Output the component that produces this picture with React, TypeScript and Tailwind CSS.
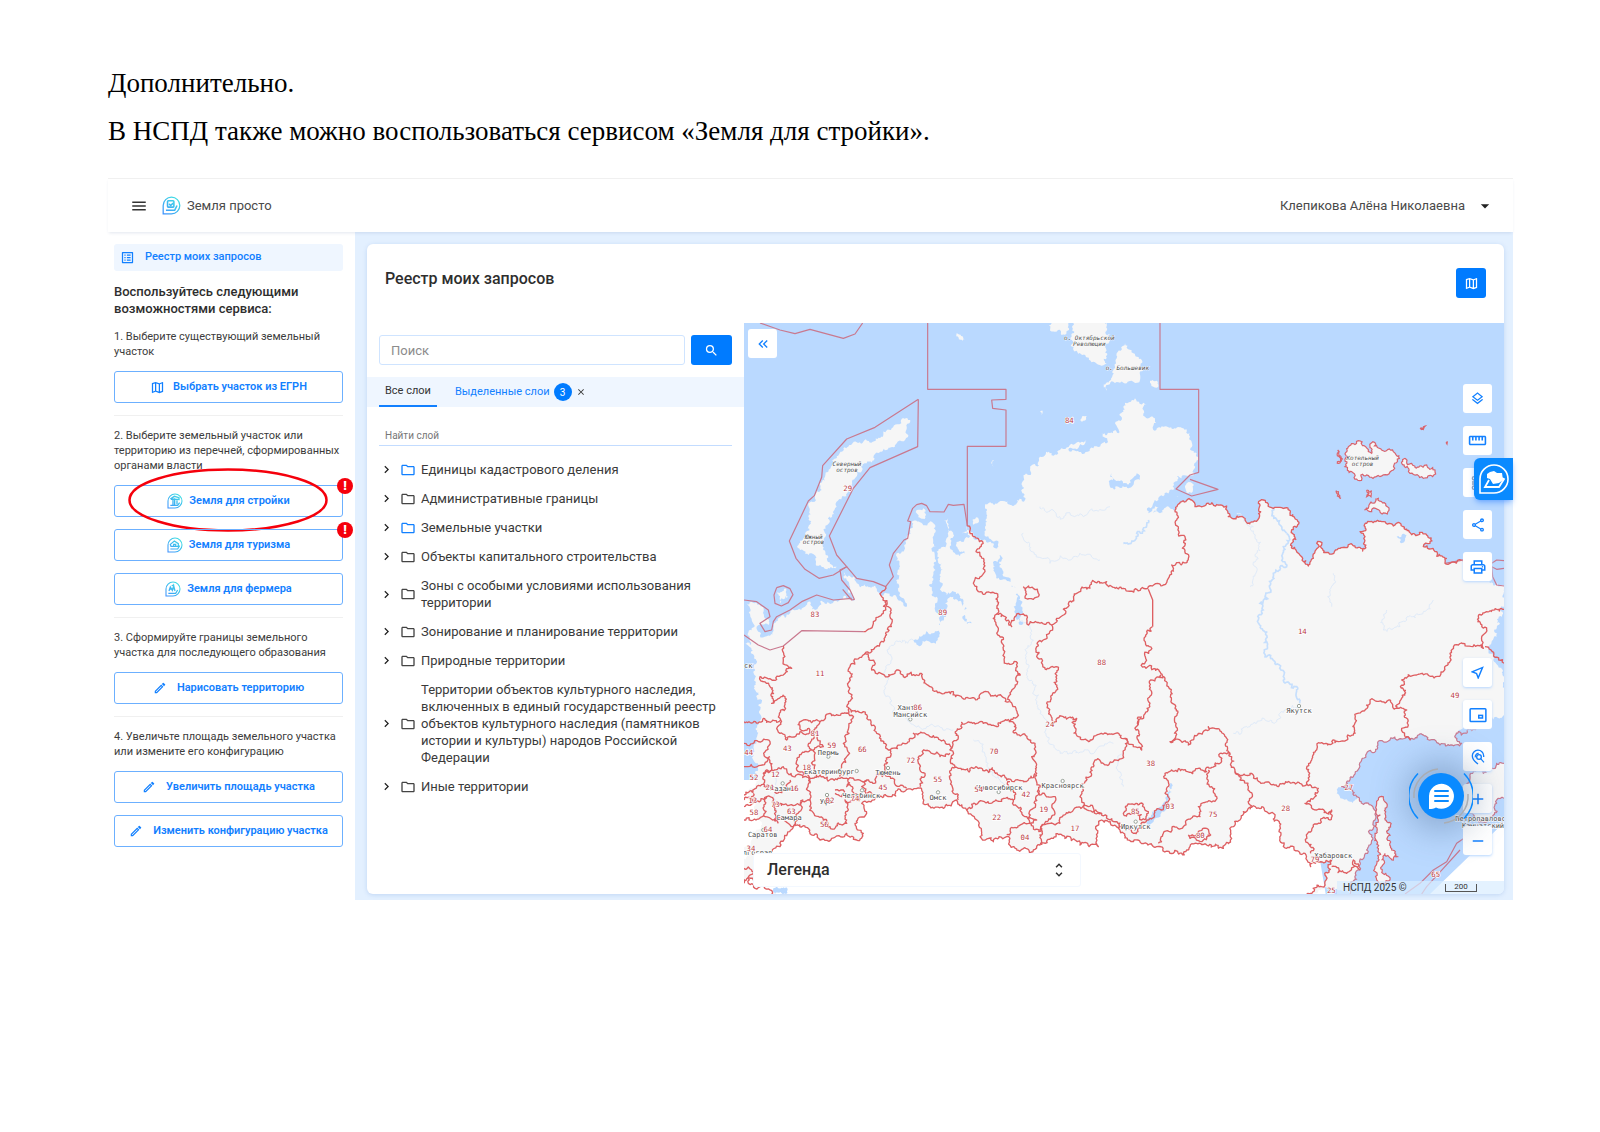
import type { ReactNode } from "react";
import {
  MdAdd,
  MdArrowDropDown,
  MdChevronRight,
  MdClose,
  MdKeyboardDoubleArrowLeft,
  MdListAlt,
  MdMenu,
  MdOutlineFolder,
  MdOutlineLayers,
  MdOutlineMap,
  MdOutlineModeEdit,
  MdOutlineNearMe,
  MdOutlinePrint,
  MdOutlineShare,
  MdRemove,
  MdSearch,
  MdStraighten,
  MdUnfoldMore,
} from "react-icons/md";

type Point = [number, number];

const layers = [
  { title: "Единицы кадастрового деления", active: true },
  { title: "Административные границы", active: false },
  { title: "Земельные участки", active: true },
  { title: "Объекты капитального строительства", active: false },
  { title: "Зоны с особыми условиями использования территории", active: false },
  { title: "Зонирование и планирование территории", active: false },
  { title: "Природные территории", active: false },
  {
    title:
      "Территории объектов культурного наследия, включенных в единый государственный реестр объектов культурного наследия (памятников истории и культуры) народов Российской Федерации",
    active: false,
  },
  { title: "Иные территории", active: false },
];

/* ---------- map data ---------- */

const northCoast =
  "12,970 30,975 32,870 20,850 70,862 88,900 85,915 50,920 60,945 100,945 115,895 150,880 170,870 195,860 205,845 225,870 240,845 300,840 345,840 330,800 310,770 315,755 345,775 350,790 400,800 440,820 490,850 505,875 500,850 480,820 470,790 480,740 470,700 500,650 515,605 580,610 583,640 575,690 588,720 580,780 590,830 585,870 600,890 600,920 575,940 520,960 575,970 600,940 625,880 615,850 640,830 665,850 672,900 695,910 676,890 670,840 620,825 605,800 605,730 590,695 620,670 625,630 612,600 625,595 640,650 645,700 690,710 650,680 655,665 690,650 665,640 680,620 700,645 760,670 780,690 765,740 780,780 815,800 830,840 845,915 846,850 825,800 795,770 785,710 775,680 735,620 740,590 735,560 830,550 855,540 845,490 870,450 910,410 960,390 1040,360 985,388 1060,385 1100,370 1085,340 1135,340 1125,310 1150,260 1185,235 1220,255 1215,290 1245,300 1240,330 1270,320 1330,325 1350,350 1370,400 1360,450 1310,470 1300,510 1240,550 1225,580 1290,565";
const laptevCoast =
  "1305,570 1325,545 1355,540 1365,560 1400,550 1460,558 1465,590 1515,600 1553,600 1555,550 1570,540 1600,565 1640,563 1672,600 1668,690 1685,710 1705,738 1720,715 1730,670 1740,665 1745,685 1765,697 1800,685 1860,682 1868,693 1875,650 1860,635 1890,605 1960,618 2010,638 2060,645 2070,670 2050,680 2085,695 2115,730 2180,715";
const okhotskCoast =
  "2230,1210 2155,1235 2150,1260 2165,1270 2100,1275 2060,1250 2010,1260 1920,1262 1880,1300 1840,1370 1805,1400 1850,1430 1900,1465 1905,1500 1890,1530 1880,1590 1860,1650 1830,1722";
const southBorder =
  "1700,1722 1745,1700 1755,1665 1775,1620 1712,1640 1695,1600 1640,1585 1620,1520 1600,1480 1550,1465 1510,1475 1500,1500 1480,1520 1475,1555 1450,1585 1400,1575 1370,1570 1340,1590 1290,1600 1250,1580 1180,1565 1140,1530 1085,1500 1070,1530 1075,1580 1020,1575 990,1550 940,1555 900,1575 870,1600 820,1580 800,1550 720,1550 680,1470 650,1440 610,1465 550,1445 545,1410 500,1408 450,1430 365,1450 380,1480 345,1510 370,1540 350,1560 320,1540 240,1560 160,1520 120,1580 90,1600 70,1650 40,1680 12,1690";

const mainland = `${northCoast} ${laptevCoast} 2250,720 2250,790 2292,800 2292,1190 ${okhotskCoast} ${southBorder}`;

const islands = [
  "485,297 508,310 505,345 470,370 420,395 380,430 350,455 330,500 290,560 255,640 250,690 290,740 240,735 215,700 180,690 175,660 195,640 205,590 225,530 245,510 255,470 280,430 310,385 370,365 430,345 455,325",
  "1000,9 1100,9 1110,60 1095,80 1100,130 1060,125 1000,90 995,60",
  "935,9 985,9 980,40 945,35",
  "1155,70 1180,100 1210,150 1200,180 1160,190 1120,185 1100,212 1098,190 1125,140 1130,100",
  "110,820 135,805 145,830 120,850",
  "530,570 550,565 558,585 535,592",
  "697,600 708,592 712,610 700,614",
  "650,40 675,58 668,62",
  "900,275 908,272 905,285",
  "1018,295 1040,288 1030,302",
  "1230,182 1255,195 1240,200",
  "1340,490 1362,495 1358,515 1340,518",
  "1290,535 1315,530 1300,550",
  "755,425 763,422 760,440",
];

const borderedIslands = [
  "1825,380 1855,362 1885,395 1895,400 1893,370 1905,368 1925,390 1960,395 1978,415 1960,450 1920,470 1880,465 1858,482 1835,455 1815,440 1820,410",
  "1995,415 2015,430 2060,435 2085,450 2078,470 2050,475 2010,460 1993,440",
  "1893,545 1915,535 1942,560 1942,582 1895,575 1873,570",
  "1880,510 1895,512 1893,530 1880,530",
  "1793,390 1803,410 1792,430",
  "1788,512 1795,515 1803,535",
  "2040,325 2056,318 2050,328",
  "2118,367 2122,366 2121,372",
  "1915,1440 1930,1430 1940,1450 1935,1480 1945,1530 1955,1590 1972,1610 1960,1620 1935,1600 1925,1640 1950,1680 1930,1690 1910,1680 1905,1640 1915,1590 1905,1540 1915,1500 1910,1450",
];

const kamchatka =
  "2292,1330 2270,1330 2230,1360 2210,1350 2190,1375 2180,1440 2200,1500 2250,1500 2270,1440 2292,1435";

const seaBorders = [
  "60,9 120,30 165,41 210,28 310,55 345,42 368,9",
  "563,9 563,208 798,208 798,238 755,240 758,265 798,270 798,379 682,379 682,618",
  "535,238 405,322 320,357 248,437 245,472 223,527 205,543 148,663 168,715 195,748 237,775 280,765 320,740 290,705 268,648 340,505 390,443 533,380 535,238",
  "1260,9 1260,208 1376,208 1376,457 1350,465 1308,507 1355,528 1434,508 1350,478",
  "320,740 350,775 400,785 437,800 460,770 448,735 460,700 492,660 503,655 512,605 503,603 518,565 530,554 545,550 560,557 570,575 612,576 625,553 640,556 672,553 682,618",
  "320,740 300,750 305,780 330,810 343,838 335,840 308,808",
  "335,835 280,840 230,825 185,845 150,870 110,890 100,905 95,930 75,935 60,910 90,890 85,870 50,845 12,840",
  "12,945 55,975 90,990 130,978 185,932 370,935",
  "110,803 130,797 150,806 159,824 145,848 124,858 105,850 102,825 110,803",
  "2180,715 2160,722 2115,730",
  "2255,730 2270,720 2292,722",
  "2255,740 2270,748 2292,745",
  "2255,740 2258,770 2270,795 2292,798",
  "2170,1556 2150,1570 2120,1625 2080,1650 2040,1690 1995,1722",
  "2160,1590 2110,1645 2060,1700 2045,1722",
];

const landBorders = [
  "370,935 400,905 430,880 440,840",
  "682,618 700,650 728,665 708,695 732,720 735,755 702,785 715,815 765,820 775,870 760,895 775,930 790,990 805,1030 832,1040 832,1090 810,1145 832,1180 808,1205 730,1210 665,1207 655,1250 630,1290 645,1340 635,1395 655,1440",
  "770,880 815,920 830,882 850,882 865,915 935,915 950,895 985,860 1010,820 1050,795 1100,785 1150,805 1190,808 1225,800 1270,795 1285,775 1295,735 1345,715 1335,650 1310,600 1305,570",
  "935,915 895,965 890,1010 955,1050 950,1100 920,1150 940,1210 970,1190 1010,1195 1015,1250 1060,1255 1100,1240 1155,1255 1180,1280 1205,1290 1195,1210 1230,1150 1232,1080 1270,1075",
  "1237,920 1220,935 1232,990 1218,1045 1270,1070 1285,1100 1305,1190 1290,1265 1345,1275 1375,1240 1405,1220 1460,1255 1475,1310 1485,1355 1530,1360 1590,1390 1700,1392",
  "1700,1392 1715,1320 1745,1268 1840,1245 1845,1195 1890,1140 1970,1165 2000,1170 2005,1215 1985,1225 2012,1260",
  "1970,1165 1985,1080 2030,1065 2110,1055 2130,1000 2155,975 2230,985 2235,940 2215,890 2240,875 2292,868",
  "2235,980 2292,1030",
  "1155,1255 1150,1300 1120,1325 1065,1320 1050,1370 1025,1440 1085,1480 1140,1520 1180,1540 1220,1500 1265,1470 1275,1420 1275,1360 1330,1350 1400,1355 1440,1330 1440,1300 1470,1305",
  "1405,1350 1415,1400 1430,1430 1375,1460 1380,1490 1330,1520 1270,1540 1255,1570",
  "1485,1355 1500,1380 1525,1400 1530,1468",
  "1700,1392 1735,1405 1695,1450 1730,1470 1775,1470 1770,1500 1720,1520 1700,1550 1712,1600",
  "1775,1640 1820,1660 1850,1640 1840,1620 1860,1650",
  "437,800 425,830 445,860 450,890 455,910 375,1000 330,1040 325,1100 325,1170 327,1240 310,1270 320,1310 300,1370",
  "375,1000 395,1050 470,1050 490,1070 540,1060 570,1100 640,1115 690,1135 740,1115 770,1130 808,1145",
  "130,978 130,1020 155,1045 60,1070 90,1100 95,1150 135,1130 133,1160 120,1195 70,1195 12,1205",
  "120,1200 120,1240 140,1260 180,1235 215,1240 215,1290 185,1300 170,1350 210,1375 230,1365 218,1290 250,1280 240,1205 190,1200 180,1220 215,1240",
  "240,1205 270,1180 325,1180",
  "327,1165 370,1175 410,1240 450,1290 435,1340 435,1365 500,1405",
  "450,1290 520,1240 570,1250 630,1290",
  "630,1300 600,1310 545,1305 535,1330 555,1360 540,1400",
  "645,1342 700,1345 800,1380 885,1360",
  "808,1205 830,1240 885,1270 875,1310 890,1360 895,1410 885,1530",
  "680,1470 760,1445 820,1440 810,1385",
  "820,1440 855,1490 890,1500 800,1545",
  "895,1410 940,1430 945,1480 900,1530 905,1575",
  "885,1530 960,1510 1000,1470 1045,1460 1085,1480",
  "230,1370 300,1375 380,1380 435,1365",
  "380,1380 365,1400 400,1430",
  "210,1375 210,1440 250,1500 270,1520 320,1500 315,1440 365,1430 320,1400 325,1375",
  "285,1410 310,1410 305,1430 285,1420",
  "12,1270 90,1265 75,1310 95,1350 70,1360 80,1400 12,1425",
  "90,1310 12,1340",
  "70,1360 130,1340 160,1370 210,1390",
  "80,1400 110,1420 150,1380",
  "12,1440 80,1430 120,1450 210,1440",
  "80,1430 75,1490 12,1500",
  "75,1490 160,1520 190,1440",
  "110,1450 115,1510",
  "12,1460 40,1450 40,1420",
  "12,1645 35,1650 25,1690 60,1700 95,1722",
  "850,800 880,805 895,820 880,838 855,830 850,800",
  "1155,1460 1200,1450 1225,1475 1205,1500 1190,1475 1150,1480 1155,1460",
  "1345,1545 1375,1540 1400,1525 1412,1545 1390,1560 1350,1555 1345,1545",
  "1195,1215 1192,1195 1205,1190",
];

const lakes = [
  "1290,1390 1295,1400 1280,1460 1220,1510 1270,1450",
  "1790,1420 1830,1395 1850,1430 1830,1445",
  "1917,405 1935,400 1925,430 1945,450 1925,440",
  "2150,1250 2170,1215 2292,1185 2292,1230 2200,1265",
  "1115,460 1125,480 1160,490 1190,460 1200,480 1160,500 1110,500",
  "1240,580 1300,520 1310,545 1260,580",
  "100,1705 142,1705 138,1722 105,1722",
  "1970,650 2000,645 1985,670",
];

const rivers = [
  "1225,600 1190,640 1150,670",
  "1640,640 1630,680 1640,740 1600,760 1560,850 1555,900 1575,1010 1630,1070 1670,1100 1680,1150",
  "1600,560 1625,620 1640,640",
];

const streams = [
  "1680,1160 1610,1200 1530,1220 1480,1240",
  "845,900 880,960 865,1080 900,1180 960,1300 1050,1300 1120,1270",
  "520,960 450,980 430,1060 450,1150 560,1220 640,1230",
  "700,1260 780,1380 790,1400",
  "120,1340 110,1400 100,1500",
  "850,640 870,690 930,730 1000,710 1080,720",
  "1490,580 1540,620 1550,700 1530,800",
  "1780,760 1770,820 1775,860",
  "1940,870 1930,930 2000,900 2080,840",
  "900,560 950,590 1030,590 1110,560",
  "1150,1400 1130,1340 1150,1300",
];

const regionCodes: [string, number, number][] = [
  ["84", 988, 308], ["29", 323, 512], ["83", 225, 890], ["89", 608, 884], ["11", 240, 1067],
  ["86", 533, 1170], ["88", 1085, 1034], ["24", 930, 1220], ["81", 225, 1248], ["59", 275, 1285],
  ["43", 142, 1294], ["44", 26, 1304], ["66", 367, 1297], ["72", 512, 1330], ["70", 762, 1301],
  ["18", 200, 1350], ["52", 42, 1379], ["12", 106, 1371], ["55", 593, 1386], ["45", 429, 1410],
  ["21", 90, 1409], ["16", 163, 1413], ["54", 716, 1415], ["42", 858, 1431], ["02", 270, 1449],
  ["74", 345, 1442], ["73", 106, 1461], ["63", 154, 1481], ["58", 42, 1485], ["19", 911, 1477],
  ["22", 770, 1501], ["56", 253, 1521], ["17", 1005, 1534], ["04", 855, 1560], ["64", 84, 1535],
  ["34", 33, 1594], ["14", 1687, 941], ["38", 1232, 1339], ["03", 1290, 1468], ["75", 1419, 1490],
  ["85", 1186, 1481], ["80", 1381, 1554], ["28", 1637, 1473], ["27", 1826, 1409], ["79", 1725, 1626],
  ["49", 2145, 1133], ["65", 2087, 1670], ["25", 1774, 1720], ["13", 38, 1450],
];

const cities: [string, number, number][] = [
  ["Хант", 498, 1171], ["Мансийск", 511, 1192], ["Пермь", 265, 1305], ["Екатеринбург", 268, 1362],
  ["Тюмень", 444, 1365], ["Казань", 128, 1412], ["Уфа", 258, 1451], ["Челябинск", 364, 1434],
  ["Самара", 147, 1499], ["Саратов", 68, 1551], ["Волгоград", 40, 1606], ["Омск", 594, 1440],
  ["Новосибирск", 778, 1409], ["Красноярск", 968, 1404], ["Иркутск", 1187, 1527],
  ["Якутск", 1677, 1179], ["Хабаровск", 1780, 1613], ["Петропавловск", 2228, 1504],
  ["Камчатский", 2229, 1525], ["ск", 25, 1043],
];

const islandNames: [string, number, number][] = [
  ["о. Октябрьской", 1048, 60], ["Революции", 1048, 77], ["о. Большевик", 1162, 149],
  ["Северный", 321, 438], ["остров", 321, 456], ["Южный", 221, 657], ["остров", 221, 673],
  ["Котельный", 1868, 421], ["остров", 1868, 438],
];

const cityDots: Point[] = [
  [511, 1198], [265, 1310], [350, 1353], [444, 1344], [128, 1390], [261, 1425], [366, 1411],
  [70, 1530], [594, 1417], [776, 1416], [968, 1383], [1187, 1505], [1677, 1158],
];

function parse(points: string): Point[] {
  return points.split(" ").map((pair) => pair.split(",").map(Number) as Point);
}

// The offset depends on the midpoint only, so shared edges always coincide.
function split(a: Point, b: Point): Point[] {
  const dx = b[0] - a[0];
  const dy = b[1] - a[1];
  const length = Math.hypot(dx, dy);
  if (length < 7) return [b];
  const x = (a[0] + b[0]) / 2;
  const y = (a[1] + b[1]) / 2;
  const noise = Math.sin(x * 12.9898 + y * 78.233) * 43758.5453;
  const turn = (noise - Math.floor(noise) - 0.5) * (length < 30 ? 0.8 : 0.4);
  const side = dx > 0 || (dx === 0 && dy > 0) ? 1 : -1;
  const mid: Point = [x - dy * turn * side, y + dx * turn * side];
  return [...split(a, mid), ...split(mid, b)];
}

function roughPath(points: string, closed = false) {
  const list = parse(points);
  if (closed) list.push(list[0]);
  const out = [list[0]];
  for (let i = 1; i < list.length; i++) out.push(...split(list[i - 1], list[i]));
  return "M" + out.map(([x, y]) => `${x.toFixed(1)} ${y.toFixed(1)}`).join("L");
}

function RussiaMap() {
  return (
    <svg
      viewBox="12 9 2280 1713"
      preserveAspectRatio="xMidYMid slice"
      className="absolute inset-0 h-full w-full rounded-br-md"
      role="img"
      aria-label="Карта"
    >
      <rect x="0" y="0" width="2400" height="1800" fill="#bad9ff" />
      <path d="M0 1380H1700L1770 1800H0ZM2300 1500L2070 1722V1800H2300Z" fill="#fff" />
      <g fill="#f6f6f6">
        <path d={roughPath(mainland, true)} />
        <path d={roughPath(kamchatka, true)} />
        {islands.map((island) => (
          <path key={island} d={roughPath(island, true)} />
        ))}
      </g>
      <g fill="#bad9ff">
        {lakes.map((lake) => (
          <path key={lake} d={roughPath(lake, true)} />
        ))}
      </g>
      <g fill="none" stroke="#c6dffd" strokeWidth="5">
        {rivers.map((river) => (
          <path key={river} d={roughPath(river)} />
        ))}
      </g>
      <g fill="none" stroke="#e0ebf9" strokeWidth="3">
        {streams.map((stream) => (
          <path key={stream} d={roughPath(stream)} />
        ))}
      </g>
      <g fill="none" stroke="#c9798f" strokeWidth="3.6" strokeLinejoin="round">
        {seaBorders.map((line) => (
          <polyline key={line} points={line} />
        ))}
        <path d={roughPath(okhotskCoast)} />
        <path d={roughPath(kamchatka)} />
      </g>
      <g fill="#f6f6f6" stroke="#d8646e" strokeWidth="3.6">
        {borderedIslands.map((island) => (
          <path key={island} d={roughPath(island, true)} />
        ))}
      </g>
      <g fill="none" stroke="#de5f62" strokeWidth="4" strokeLinejoin="round">
        <path d={roughPath(laptevCoast)} />
        <path d={roughPath(southBorder)} />
        <path d="M1225 808L1238 840V920" />
        {landBorders.map((line) => (
          <path key={line} d={roughPath(line)} />
        ))}
      </g>
      <g fill="#fff" stroke="#9aa39a" strokeWidth="3">
        {cityDots.map(([x, y]) => (
          <circle key={`${x}-${y}`} cx={x} cy={y} r="5" />
        ))}
      </g>
      <g
        textAnchor="middle"
        stroke="#fff"
        strokeWidth="4"
        paintOrder="stroke"
        fontSize="21"
        fill="#4a4a4a"
        className="font-['DejaVu_Sans_Mono',monospace]"
      >
        {cities.map(([name, x, y]) => (
          <text key={name} x={x} y={y}>
            {name}
          </text>
        ))}
        <g fontSize="18" fontStyle="italic" strokeWidth="2">
          {islandNames.map(([name, x, y]) => (
            <text key={`${name}-${x}`} x={x} y={y}>
              {name}
            </text>
          ))}
        </g>
        <g fontSize="22" fill="#b93a44">
          {regionCodes.map(([code, x, y]) => (
            <text key={code} x={x} y={y}>
              {code}
            </text>
          ))}
        </g>
      </g>
    </svg>
  );
}

/* ---------- icons ---------- */

function DropIcon({ className, children }: { className: string; children: ReactNode }) {
  return (
    <svg viewBox="0 0 24 24" className={className} fill="none" stroke="url(#drop)" strokeWidth="1.6">
      <defs>
        <linearGradient id="drop" x1="0" y1="24" x2="20" y2="0" gradientUnits="userSpaceOnUse">
          <stop offset="0" stopColor="#3d8bff" />
          <stop offset="1" stopColor="#3fe6e0" />
        </linearGradient>
      </defs>
      <path d="M1.5 22.5V12A10.5 10.5 0 1 1 12 22.5Z" />
      {children}
    </svg>
  );
}

function BuildIcon() {
  return (
    <DropIcon className="size-4">
      <path d="M5 18.500h11l3-4M9 18V8M11.500 18V8M5 9l6-4 7 2v4M6 9.500h11M15 11v6" strokeWidth="2" />
    </DropIcon>
  );
}

function TourismIcon() {
  return (
    <DropIcon className="size-4">
      <path d="M5 18h11l3-5M6 14l-1-3 6-5 6 4v4H8ZM10 14v-3h3v3" strokeWidth="1.8" />
    </DropIcon>
  );
}

function FarmIcon() {
  return (
    <DropIcon className="size-4">
      <path d="M5 18.500h11l3-5M6 15l2-6 3 5 2-7 2 8M7 12h6M10 7l4-1" strokeWidth="1.9" />
    </DropIcon>
  );
}

function PinSearchIcon() {
  return (
    <svg viewBox="0 0 24 24" className="size-4" fill="none" stroke="currentColor" strokeWidth="2">
      <path d="M12 22.500C6.500 18.500 3.500 14.500 3.500 10.500A8.500 8.500 0 0 1 20.500 10v2" />
      <circle cx="13.500" cy="12" r="3.500" />
      <path d="M16 14.500 21 20M8 12.500A5 5 0 0 1 13 6.500" strokeWidth="1.800" />
    </svg>
  );
}

function MiniMapIcon() {
  return (
    <svg viewBox="0 0 24 24" className="size-[18px]" fill="none" stroke="currentColor" strokeWidth="2">
      <rect x="1.500" y="3.500" width="21" height="17" rx="1" />
      <rect x="13" y="12.500" width="5" height="3.500" />
    </svg>
  );
}

function NodesIcon() {
  return (
    <svg viewBox="0 0 24 24" className="size-4 text-gray-400" fill="none" stroke="currentColor" strokeWidth="2">
      <circle cx="6" cy="5" r="2.500" />
      <circle cx="6" cy="19" r="2.500" />
      <path d="M3 10.500h6M3 13.500h6M15 12h6" />
    </svg>
  );
}

function AlertBadge() {
  return (
    <span className="absolute -top-2 -right-[11px] flex size-4 items-center justify-center rounded-full bg-[#f5000c] text-[13px] font-black leading-4 text-white">
      !
    </span>
  );
}

/* ---------- sidebar ---------- */

function ActionButton({
  icon,
  label,
  badge,
  circled,
}: {
  icon: ReactNode;
  label: string;
  badge?: boolean;
  circled?: boolean;
}) {
  return (
    <button
      type="button"
      className="relative flex h-8 w-full items-center justify-center gap-1.5 rounded-[3px] border border-[#6cb0ff] text-[11px] font-semibold text-[#1280ff]"
    >
      {icon}
      {label}
      {circled && (
        <svg
          viewBox="0 0 200 64"
          className="absolute -top-[18px] left-[13px] h-16 w-[200px]"
          fill="none"
          stroke="#f5000c"
          strokeWidth="2.500"
        >
          <ellipse cx="100" cy="32" rx="98.500" ry="30.500" />
        </svg>
      )}
      {badge && <AlertBadge />}
    </button>
  );
}

function Step({ text, children }: { text: string; children: ReactNode }) {
  return (
    <section className="flex flex-col gap-3 border-b border-[#f0f0f0] py-3 last:border-b-0">
      <p className="text-[11px] leading-[15px] text-[#3c3c3c]">{text}</p>
      {children}
    </section>
  );
}

function Sidebar() {
  const pencil = <MdOutlineModeEdit className="mr-1 size-3.5" />;
  return (
    <aside className="w-[247px] shrink-0 pt-3 pr-3 pl-1.5">
      <a
        href="#registry"
        className="flex h-[27px] items-center gap-2.5 rounded-[3px] bg-[#eff6ff] px-1.5 text-[11px] font-medium text-[#1280ff]"
      >
        <MdListAlt className="size-[15px]" />
        Реестр моих запросов
      </a>
      <h2 className="mt-3 text-[13px] leading-[17px] font-medium text-[#2e2e2e]">
        Воспользуйтесь следующими возможностями сервиса:
      </h2>
      <Step text="1. Выберите существующий земельный участок">
        <ActionButton icon={<MdOutlineMap className="mr-0.5 size-[15px]" />} label="Выбрать участок из ЕГРН" />
      </Step>
      <Step text="2. Выберите земельный участок или территорию из перечней, сформированных органами власти">
        <ActionButton icon={<BuildIcon />} label="Земля для стройки" badge circled />
        <ActionButton icon={<TourismIcon />} label="Земля для туризма" badge />
        <ActionButton icon={<FarmIcon />} label="Земля для фермера" />
      </Step>
      <Step text="3. Сформируйте границы земельного участка для последующего образования">
        <ActionButton icon={pencil} label="Нарисовать территорию" />
      </Step>
      <Step text="4. Увеличьте площадь земельного участка или измените его конфигурацию">
        <ActionButton icon={pencil} label="Увеличить площадь участка" />
        <ActionButton icon={pencil} label="Изменить конфигурацию участка" />
      </Step>
    </aside>
  );
}

/* ---------- layers panel ---------- */

function LayersPanel() {
  return (
    <div className="w-[377px] shrink-0">
      <form className="flex gap-1.5 px-3 py-3">
        <input
          type="search"
          aria-label="Поиск"
          placeholder="Поиск"
          className="h-[30px] min-w-0 flex-1 rounded-[3px] border border-[#cfe4ff] px-[11px] text-[13px] text-[#333] placeholder:text-[#8c8c8c]"
        />
        <button
          type="button"
          aria-label="Найти"
          className="flex h-[30px] w-[41px] items-center justify-center rounded-[3px] bg-[#007bff] text-white"
        >
          <MdSearch className="size-[15px]" />
        </button>
      </form>
      <div className="flex h-[30px] items-stretch bg-[#eff6ff] px-3 text-[11px]">
        <button type="button" className="border-b-2 border-[#1280ff] px-1.5 text-[#333]">
          Все слои
        </button>
        <button type="button" className="ml-[18px] flex items-center gap-1 text-[#1280ff]">
          Выделенные слои
          <span className="flex size-[18px] items-center justify-center rounded-full bg-[#007bff] text-[10px] text-white">
            3
          </span>
        </button>
        <button type="button" aria-label="Снять выделение" className="ml-1 text-[#333]">
          <MdClose className="size-2.5" />
        </button>
      </div>
      <div className="px-3 pt-[19px]">
        <input
          type="text"
          aria-label="Найти слой"
          placeholder="Найти слой"
          className="block h-5 w-full border-b border-[#c3dcff] px-1.5 text-[10px] placeholder:text-[#777]"
        />
      </div>
      <ul className="mt-[9px] px-3">
        {layers.map((layer) => (
          <li key={layer.title}>
            <button type="button" className="flex w-full items-center py-1.5 text-left">
              <MdChevronRight className="size-[15px] shrink-0 text-[#222]" />
              <MdOutlineFolder
                className={layer.active ? "ml-1.5 size-4 shrink-0 text-[#1280ff]" : "ml-1.5 size-4 shrink-0 text-[#444]"}
              />
              <span className="ml-[5px] flex-1 pr-4 text-[13px] leading-[17px] text-[#3a3a3a]">{layer.title}</span>
            </button>
          </li>
        ))}
      </ul>
    </div>
  );
}

/* ---------- map panel ---------- */

function MapButton({ label, children }: { label: string; children: ReactNode }) {
  return (
    <button
      type="button"
      aria-label={label}
      className="flex size-[29px] items-center justify-center rounded-[3px] bg-white text-[#1280ff] shadow-sm shadow-blue-200"
    >
      {children}
    </button>
  );
}

function ChatButton() {
  return (
    <button
      type="button"
      aria-label="Чат"
      className="absolute right-[31px] bottom-[66px] flex size-16 items-center justify-center"
    >
      <span className="absolute size-11 rounded-full shadow-[0_0_36px_12px_rgba(60,90,130,0.4)]" />
      <svg viewBox="0 0 64 64" fill="none" className="relative size-16">
        <circle cx="32" cy="32" r="23" fill="#0a8aff" />
        <path d="M20 45V32a12.500 12.500 0 1 1 7 11.500c-2 1.200-4 1.500-7 1.500Z" fill="#fff" />
        <path d="M26 27h13M26 32h13M26 37h13" stroke="#0a8aff" strokeWidth="2" strokeLinecap="round" />
        <path d="M9 54.500A32 32 0 0 1 9 9.500M55 9.500a32 32 0 0 1 0 45" stroke="#0a8aff" strokeWidth="1.500" />
        <path d="M5 34A27 27 0 0 1 29 5M59 30a27 27 0 0 1-24 29" stroke="#a9adb3" strokeWidth="1.500" />
      </svg>
    </button>
  );
}

function MapPanel() {
  return (
    <div className="relative min-w-0 flex-1">
      <RussiaMap />
      <div className="absolute top-1.5 left-1">
        <MapButton label="Свернуть панель">
          <MdKeyboardDoubleArrowLeft className="size-4" />
        </MapButton>
      </div>
      <div className="absolute top-[61px] right-3 flex flex-col gap-[13px]">
        <MapButton label="Слои">
          <MdOutlineLayers className="size-[15px]" />
        </MapButton>
        <MapButton label="Линейка">
          <MdStraighten className="size-[19px]" />
        </MapButton>
        <MapButton label="Сравнение">
          <NodesIcon />
        </MapButton>
        <MapButton label="Поделиться">
          <MdOutlineShare className="size-4" />
        </MapButton>
        <MapButton label="Печать">
          <MdOutlinePrint className="size-[18px]" />
        </MapButton>
      </div>
      <div className="absolute right-3 bottom-[39px] flex flex-col gap-[13px]">
        <MapButton label="Моё местоположение">
          <MdOutlineNearMe className="size-[17px]" />
        </MapButton>
        <MapButton label="Мини-карта">
          <MiniMapIcon />
        </MapButton>
        <MapButton label="Поиск на карте">
          <PinSearchIcon />
        </MapButton>
        <MapButton label="Приблизить">
          <MdAdd className="size-[18px]" />
        </MapButton>
        <MapButton label="Отдалить">
          <MdRemove className="size-[18px]" />
        </MapButton>
      </div>
      <ChatButton />
      <button
        type="button"
        aria-label="Сервисы земли"
        className="absolute top-[135px] -right-[9px] flex h-[42px] w-[39px] items-center justify-center rounded-l-md bg-[#0a8aff] shadow-md shadow-blue-500/40"
      >
        <svg viewBox="0 0 32 32" className="size-8" fill="none" stroke="#fff" strokeWidth="1.600">
          <path d="M2 30V16A14 14 0 1 1 16 30Z" />
          <path d="M9 11l3-2 4-1 3 2h5l1 7-4 3-6 1-3-5-3-1Z" fill="#fff" stroke="none" />
          <path d="M11 17l-4 7h14l5-8-2-1" strokeWidth="1.800" />
        </svg>
      </button>
      <button
        type="button"
        className="absolute bottom-[7px] left-[9px] flex h-[34px] w-[328px] items-center justify-between rounded-[3px] border border-[#f3f8ff] bg-white pr-3 pl-[13px] text-[16px] font-medium text-[#2e2e2e]"
      >
        Легенда
        <MdUnfoldMore className="size-[18px]" />
      </button>
      <div className="absolute right-0 bottom-0 flex h-[13px] w-[167px] items-center justify-between rounded-br-md bg-[#d8ecff]/70 pr-[27px] pl-1.5 text-[10px] leading-3 text-[#333]">
        НСПД 2025 ©
        <span className="flex h-2 w-8 items-center justify-center border-x border-b border-[#555] text-[8px] leading-none">
          200
        </span>
      </div>
    </div>
  );
}

export default function App() {
  return (
    <main className="min-h-screen bg-white pt-[59px] pr-[87px] pb-12 pl-[108px] font-['Roboto','Inter',sans-serif]">
      <div className="font-['Liberation_Serif',serif] text-[27px] leading-[48px] text-black">
        <p>Дополнительно.</p>
        <p>В НСПД также можно воспользоваться сервисом «Земля для стройки».</p>
      </div>
      <div className="mt-[23px]">
        <header className="relative z-10 flex h-[54px] items-center border-t border-[#f0f0f0] bg-white px-[22px] text-[13px] text-[#4a4a4a] shadow-[0_2px_3px_-1px_rgba(60,90,140,0.15)]">
          <button type="button" aria-label="Меню" className="text-[#333]">
            <MdMenu className="size-[18px]" />
          </button>
          <a href="#home" className="ml-3.5 flex items-center gap-1.5">
            <DropIcon className="size-[19px]">
              <rect x="7" y="6" width="8" height="8" rx="1" strokeWidth="2" />
              <path d="M9 10l2 2 3-3M5 18h11l3-6" strokeWidth="2" />
            </DropIcon>
            Земля просто
          </a>
          <button type="button" className="ml-auto flex items-center gap-2.5">
            Клепикова Алёна Николаевна
            <MdArrowDropDown className="-mr-1 size-5 text-[#222]" />
          </button>
        </header>
        <div className="flex">
          <Sidebar />
          <div className="flex min-w-0 flex-1 bg-[#e3f0ff] pt-3 pr-[9px] pb-1.5 pl-3">
            <section className="flex min-w-0 flex-1 flex-col rounded-md bg-white shadow-[0_1px_4px_rgba(90,140,210,0.25)]">
              <div className="flex h-[79px] items-start justify-between pt-6 pr-[18px] pl-[18px]">
                <h1 className="text-[16px] leading-[22px] font-medium text-[#2e2e2e]">Реестр моих запросов</h1>
                <button
                  type="button"
                  aria-label="Карта"
                  className="flex size-[30px] items-center justify-center rounded-[3px] bg-[#007bff] text-white"
                >
                  <MdOutlineMap className="size-[15px]" />
                </button>
              </div>
              <div className="flex min-h-[571px] flex-1">
                <LayersPanel />
                <MapPanel />
              </div>
            </section>
          </div>
        </div>
      </div>
    </main>
  );
}
